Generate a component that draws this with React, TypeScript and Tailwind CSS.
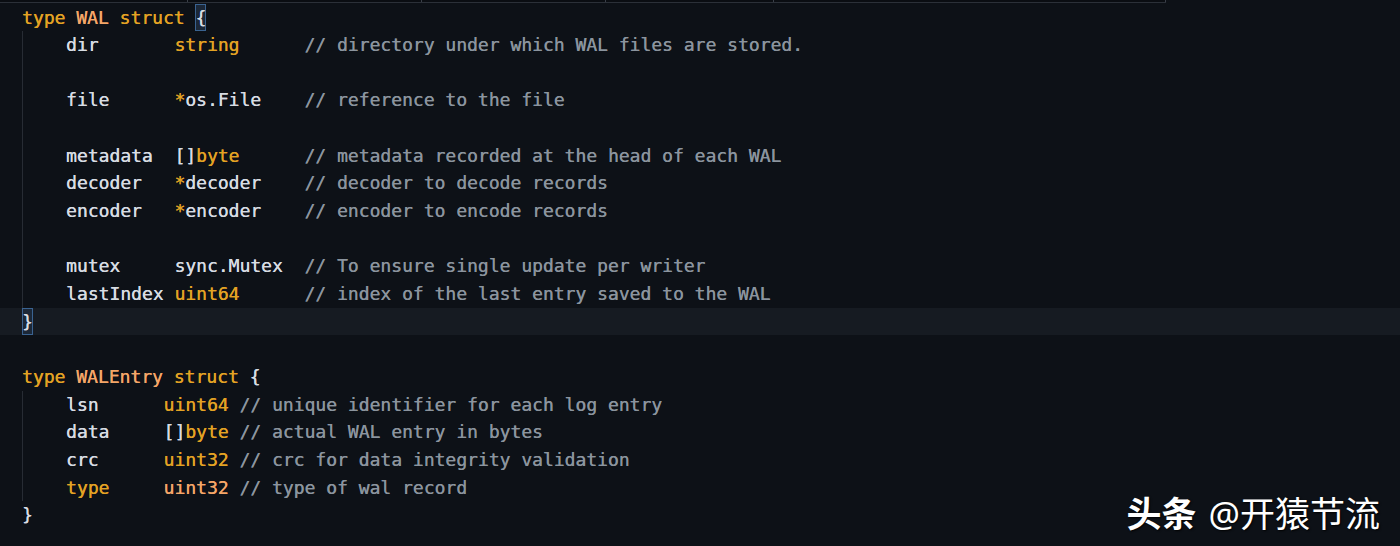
import React from 'react'

type Tok = [string, string]

const K = 'text-[#e3a324]' // keywords / builtin types
const N = 'text-[#f4a668]' // type names
const I = 'text-[#d7dce2]' // identifiers
const C = 'text-[#8b949e]' // comments

const walFields: (Tok[] | null)[] = [
  [['dir       ', I], ['string', K], ['      // directory under which WAL files are stored.', C]],
  null,
  [['file      ', I], ['*', K], ['os.File', I], ['    // reference to the file', C]],
  null,
  [['metadata  ', I], ['[]', I], ['byte', K], ['      // metadata recorded at the head of each WAL', C]],
  [['decoder   ', I], ['*', K], ['decoder', I], ['    // decoder to decode records', C]],
  [['encoder   ', I], ['*', K], ['encoder', I], ['    // encoder to encode records', C]],
  null,
  [['mutex     ', I], ['sync.Mutex', I], ['  // To ensure single update per writer', C]],
  [['lastIndex ', I], ['uint64', K], ['      // index of the last entry saved to the WAL', C]],
]

const entryFields: Tok[][] = [
  [['lsn      ', I], ['uint64', K], [' // unique identifier for each log entry', C]],
  [['data     ', I], ['[]', I], ['byte', K], [' // actual WAL entry in bytes', C]],
  [['crc      ', I], ['uint32', K], [' // crc for data integrity validation', C]],
  [['type', K], ['     ', I], ['uint32', N], [' // type of wal record', C]],
]

function Line({ toks, className = '' }: { toks: Tok[] | null; className?: string }) {
  return (
    <div className={`h-[27.67px] whitespace-pre ${className}`}>
      {toks ? toks.map(([t, c], i) => <span key={i} className={c}>{t}</span>) : ' '}
    </div>
  )
}

function Bracket({ ch }: { ch: string }) {
  return (
    <span className="inline-block align-top h-[27.67px] bg-[#1c2838] text-[#d7dce2] shadow-[inset_0_0_0_1px_#3a6391]">
      {ch}
    </span>
  )
}

export default function App() {
  return (
    <div className="relative w-[1400px] h-[546px] overflow-hidden bg-[#0d1117]">
      {/* cut-off tab strip above the editor */}
      <div className="flex h-[3px] w-[1166px] border-b border-[#2b3038] bg-[#0a0d12]">
        <div className="w-[188px] border-r border-[#3a3f48]" />
        <div className="w-[234px] border-r border-[#3a3f48]" />
        <div className="w-[184px] border-r border-[#3a3f48]" />
        <div className="w-[168px] border-r border-[#3a3f48]" />
        <div className="flex-1 border-r border-[#3a3f48]" />
      </div>

      <div
        className="pt-[0.5px] text-[18px] leading-[27.67px] [text-shadow:0.3px_0_0_currentColor]"
        style={{ fontFamily: '"DejaVu Sans Mono", "Liberation Mono", monospace' }}
      >
        <div className="pl-[22px] whitespace-pre h-[27.67px]">
          <span className={K}>type </span>
          <span className={N}>WAL</span>
          <span className={K}> struct </span>
          <Bracket ch="{" />
        </div>
        <div className="ml-[22px] border-l border-[#272c34] pl-[43px]">
          {walFields.map((f, i) => (
            <Line key={i} toks={f} />
          ))}
        </div>
        <div className="pl-[22px] h-[27.67px] bg-[#161b22]">
          <Bracket ch="}" />
        </div>
        <Line toks={null} />
        <div className="pl-[22px] whitespace-pre h-[27.67px]">
          <span className={K}>type </span>
          <span className={N}>WALEntry</span>
          <span className={K}> struct </span>
          <span className={I}>{'{'}</span>
        </div>
        <div className="ml-[22px] border-l border-[#272c34] pl-[43px]">
          {entryFields.map((f, i) => (
            <Line key={i} toks={f} />
          ))}
        </div>
        <div className={`pl-[22px] h-[27.67px] ${I}`}>{'}'}</div>
      </div>

      {/* watermark */}
      <div
        className="absolute right-[20px] bottom-[15px] flex items-center gap-[12px] text-[35px] leading-none text-white [text-shadow:1px_1px_2px_rgba(0,0,0,0.9)]"
        style={{ fontFamily: '"Noto Sans", "Noto Sans CJK SC", sans-serif' }}
      >
        <span className="font-bold">头条</span>
        <span>@开猿节流</span>
      </div>
    </div>
  )
}
